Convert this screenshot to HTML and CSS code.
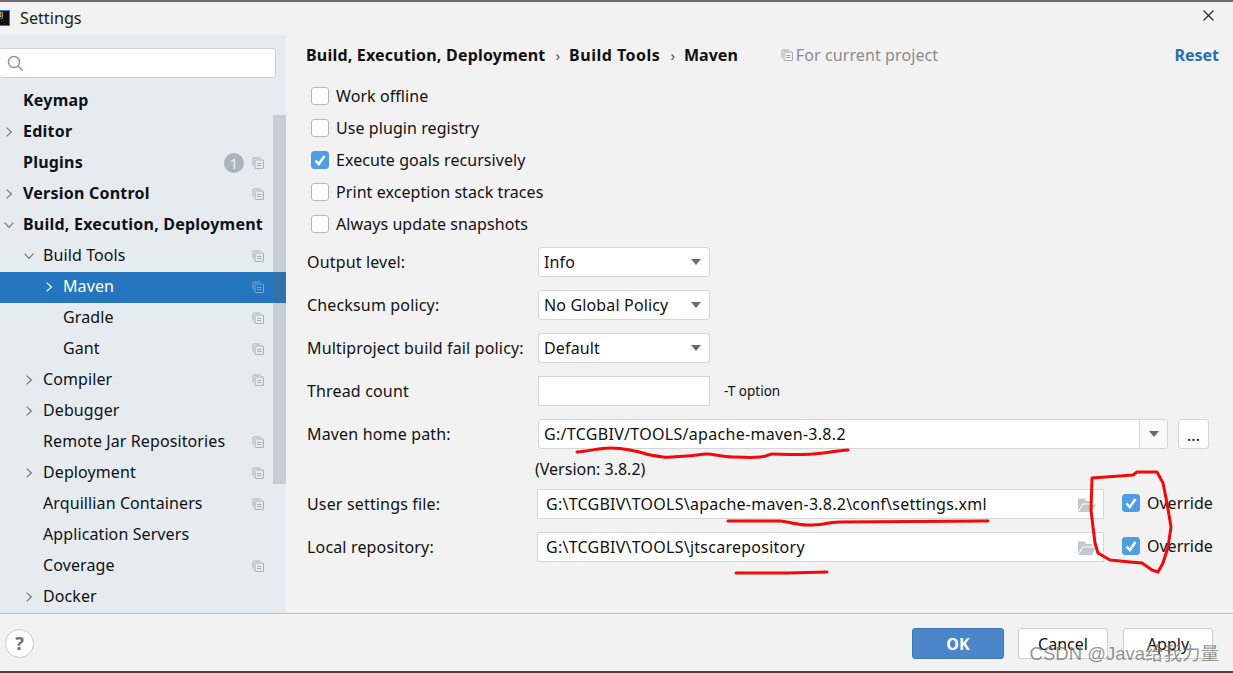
FILE: index.html
```html
<!DOCTYPE html>
<html lang="en">
<head>
<meta charset="utf-8">
<title>Settings</title>
<link rel="stylesheet" href="styles.css">
</head>
<body>
<svg class="defs" width="0" height="0">
  <symbol id="copy" viewBox="0 0 12 12">
    <path d="M1 8.5V1.5a.5.5 0 0 1 .5-.5H8.500" fill="none" stroke="currentColor"/>
    <rect x="3" y="3" width="8.500" height="8.500" rx=".5" fill="none" stroke="currentColor"/>
    <path d="M5 6.500h4.500M5 8.500h4.500" stroke="currentColor"/>
  </symbol>
  <symbol id="right" viewBox="0 0 10 14"><path d="M2 1.500 8 7l-6 5.500" fill="none" stroke="currentColor" stroke-width="1.500"/></symbol>
  <symbol id="down" viewBox="0 0 14 10"><path d="M1.500 2 7 8l5.500-6" fill="none" stroke="currentColor" stroke-width="1.500"/></symbol>
  <symbol id="check" viewBox="0 0 16 16"><path d="M3.500 8.500 6.800 12 12.500 4" fill="none" stroke="#fff" stroke-width="2.500"/></symbol>
  <symbol id="folder" viewBox="0 0 19 14"><path d="M1 13V.5h6.500L9 3h6v2.500H5.500L1 13Zm.500 1L6 6.500h13L15 14Z" fill="#c3c9ce"/></symbol>
</svg>

<div class="dialog">
  <header class="titlebar">
    <span class="app-icon">IJ</span>
    <span class="title">Settings</span>
    <span class="close">
      <svg width="13" height="13" viewBox="0 0 13 13"><path d="M1.500 1.500l10 10m0-10-10 10" stroke="#222" stroke-width="1.100"/></svg>
    </span>
  </header>

  <div class="main">
    <aside class="sidebar">
      <div class="search">
        <svg width="17" height="17" viewBox="0 0 17 17"><circle cx="7" cy="7" r="5.500" fill="none" stroke="#8b9096" stroke-width="1.400"/><path d="m11 11 4.500 4.500" stroke="#8b9096" stroke-width="1.600"/></svg>
      </div>
      <ul class="tree">
        <li class="row l0 bold">Keymap</li>
        <li class="row l0 bold"><svg class="arrow"><use href="#right"/></svg>Editor</li>
        <li class="row l0 bold">Plugins<span class="badge">1</span><svg class="copy"><use href="#copy"/></svg></li>
        <li class="row l0 bold"><svg class="arrow"><use href="#right"/></svg>Version Control<svg class="copy"><use href="#copy"/></svg></li>
        <li class="row l0 bold"><svg class="arrow open"><use href="#down"/></svg>Build, Execution, Deployment</li>
        <li class="row l1"><svg class="arrow open"><use href="#down"/></svg>Build Tools<svg class="copy"><use href="#copy"/></svg></li>
        <li class="row l2 selected"><svg class="arrow"><use href="#right"/></svg>Maven<svg class="copy"><use href="#copy"/></svg></li>
        <li class="row l2">Gradle<svg class="copy"><use href="#copy"/></svg></li>
        <li class="row l2">Gant<svg class="copy"><use href="#copy"/></svg></li>
        <li class="row l1"><svg class="arrow"><use href="#right"/></svg>Compiler<svg class="copy"><use href="#copy"/></svg></li>
        <li class="row l1"><svg class="arrow"><use href="#right"/></svg>Debugger</li>
        <li class="row l1">Remote Jar Repositories<svg class="copy"><use href="#copy"/></svg></li>
        <li class="row l1"><svg class="arrow"><use href="#right"/></svg>Deployment<svg class="copy"><use href="#copy"/></svg></li>
        <li class="row l1">Arquillian Containers<svg class="copy"><use href="#copy"/></svg></li>
        <li class="row l1">Application Servers</li>
        <li class="row l1">Coverage<svg class="copy"><use href="#copy"/></svg></li>
        <li class="row l1"><svg class="arrow"><use href="#right"/></svg>Docker</li>
      </ul>
      <div class="thumb"></div>
    </aside>

    <section class="content">
      <div class="crumbs">
        <span class="crumb">Build, Execution, Deployment</span><span class="sep">›</span>
        <span class="crumb wide">Build Tools</span><span class="sep">›</span>
        <span class="crumb plain">Maven</span>
        <span class="scope"><svg class="copy scope-icon"><use href="#copy"/></svg>For current project</span>
        <a class="reset">Reset</a>
      </div>

      <div class="checks">
        <label class="check"><span class="box"></span>Work offline</label>
        <label class="check"><span class="box"></span>Use plugin registry</label>
        <label class="check"><span class="box on"><svg><use href="#check"/></svg></span>Execute goals recursively</label>
        <label class="check"><span class="box"></span>Print exception stack traces</label>
        <label class="check"><span class="box"></span>Always update snapshots</label>
      </div>

      <div class="form">
        <div class="frow"><span class="flabel">Output level:</span><div class="select">Info<i class="tri"></i></div></div>
        <div class="frow"><span class="flabel">Checksum policy:</span><div class="select">No Global Policy<i class="tri"></i></div></div>
        <div class="frow"><span class="flabel">Multiproject build fail policy:</span><div class="select">Default<i class="tri"></i></div></div>
        <div class="frow"><span class="flabel">Thread count</span><div class="input short"></div><span class="hint">-T option</span></div>
        <div class="frow"><span class="flabel">Maven home path:</span>
          <div class="combo"><span class="combo-text">G:/TCGBIV/TOOLS/apache-maven-3.8.2</span><span class="combo-btn"><i class="tri"></i></span></div>
          <div class="dots">...</div>
        </div>
        <div class="version">(Version: 3.8.2)</div>
        <div class="frow"><span class="flabel">User settings file:</span>
          <div class="input path">G:\TCGBIV\TOOLS\apache-maven-3.8.2\conf\settings.xml<svg class="folder"><use href="#folder"/></svg></div>
          <label class="check over"><span class="box on"><svg><use href="#check"/></svg></span>Override</label>
        </div>
        <div class="frow"><span class="flabel">Local repository:</span>
          <div class="input path">G:\TCGBIV\TOOLS\jtscarepository<svg class="folder"><use href="#folder"/></svg></div>
          <label class="check over"><span class="box on"><svg><use href="#check"/></svg></span>Override</label>
        </div>
      </div>
    </section>
  </div>

  <footer class="footer">
    <span class="help">?</span>
    <div class="buttons">
      <button class="btn primary">OK</button>
      <button class="btn">Cancel</button>
      <button class="btn">Apply</button>
    </div>
  </footer>

  <svg class="ink" width="1233" height="673" viewBox="0 0 1233 673">
    <path d="M577 452C590 451 600 448 610 448S625 449 630 450 640 452 643 453 655 456 663 457 680 456 687 456 700 454 707 454 722 457 733 457 750 458 760 457 768 454 773 454 800 455 813 454 835 451 848 450"/>
    <path d="M728 521 780 521C790 522 798 525 807 525S818 525 823 524 832 522 840 522L988 521"/>
    <path d="M736 573 787 573 827 572"/>
    <path d="M1092 478 1133 475 1137 472 1157 472 1163 483 1167 503 1171 527 1168 547 1163 563 1158 572 1152 570 1142 563 1130 562 1110 560 1098 553 1095 543 1093 527 1091 510Z"/>
  </svg>
  <div class="watermark">CSDN @Java给我力量</div>
</div>
</body>
</html>
```

FILE: styles.css
```css
* { box-sizing: border-box; }
html, body { margin: 0; height: 100%; overflow: hidden; }
body { background: #f2f2f2; }
.defs { position: absolute; }

.dialog {
  position: relative;
  width: 1233px;
  height: 673px;
  display: flex;
  flex-direction: column;
  background: #f2f2f2;
  color: #111;
  font: 16px "Noto Sans", "Open Sans", sans-serif;
  border-top: 2px solid #6d6d6d;
  border-bottom: 2px solid #444;
  overflow: hidden;
}

.titlebar { height: 33px; display: flex; align-items: center; flex: none; }
.app-icon {
  width: 11px; height: 16px; margin-left: -1px; margin-top: -1px;
  background: #111; border: 1px solid #1e7be0; border-left: 0;
  color: #fff; font-size: 7px; line-height: 8px; overflow: hidden; flex: none;
}
.title { margin: -2px 0 0 10px; color: #222; font-size: 16.200px; }
.close { margin-left: auto; margin-right: 18px; display: flex; margin-top: -6px; }

.main { flex: 1; display: flex; min-height: 0; }

.sidebar { position: relative; width: 286px; flex: none; background: #e6ebf0; overflow: hidden; padding-top: 13px; }
.search {
  width: 277px; height: 30px; margin-left: -1px; padding: 6px 0 0 7px;
  background: #fff; border: 1px solid #d0d2d4; border-radius: 3px;
}
.tree { list-style: none; margin: 8px 0 0; padding: 0; letter-spacing: .1px; }
.row { display: flex; align-items: center; height: 31px; position: relative; padding-bottom: 3px; color: #0e1116; }
.bold { font-weight: 700; letter-spacing: .22px; }
.l0 { padding-left: 23px; }
.l1 { padding-left: 43px; }
.l2 { padding-left: 63px; }
.selected { background: #2675bf; color: #fff; }
.arrow { position: absolute; top: 9px; width: 8px; height: 12px; color: #777; }
.arrow.open { width: 12px; height: 8px; top: 11px; margin-left: -2px; }
.l0 .arrow { left: 5px; }
.l1 .arrow { left: 25px; }
.l2 .arrow { left: 45px; color: #fff; }
.copy { position: absolute; right: 22px; top: 9px; width: 12px; height: 12px; color: #a9b0b6; }
.selected .copy { color: #7ba6d2; }
.badge {
  position: absolute; right: 42px; top: 5px;
  width: 20px; height: 20px; border-radius: 50%;
  background: #a9b4bd; color: #eef1f3;
  font-weight: 400; font-size: 15px; line-height: 20px; text-align: center;
}
.thumb {
  position: absolute; right: 0; top: 80px;
  width: 13px; height: 369px;
  background: rgba(90, 100, 115, .22);
}

.content { flex: 1; padding: 0 14px 0 20px; min-width: 0; }
.crumbs { display: flex; align-items: center; height: 22px; margin-top: 9px; font-size: 16px; }
.crumb { font-weight: 700; letter-spacing: .2px; }
.crumb.wide { letter-spacing: .5px; }
.crumb.plain { letter-spacing: 0; }
.sep { margin: 0 9px 0 10px; color: #555; font-size: 15px; }
.scope { display: flex; align-items: center; margin-left: 43px; color: #8b8b8b; letter-spacing: .1px; }
.copy.scope-icon { position: static; margin-right: 3px; color: #a6a6a6; }
.reset { margin-left: auto; color: #2470b3; font-weight: 700; }

.checks { margin: 14px 0 0 5px; display: flex; flex-direction: column; letter-spacing: .07px; }
.check { display: flex; align-items: center; height: 32px; color: #111; }
.box {
  width: 18px; height: 18px; margin-right: 7px; flex: none;
  background: #fff; border: 1px solid #b4b6b8; border-radius: 3px;
}
.box.on { background: #4f9ee3; border-color: #4f9ee3; }
.box svg { display: block; width: 16px; height: 16px; }

.form { margin-top: 7px; display: flex; flex-direction: column; }
.frow { display: flex; align-items: center; height: 30px; margin-bottom: 13px; }
.flabel { width: 231px; margin-left: 1px; flex: none; letter-spacing: .16px; }
.select, .input, .combo { height: 30px; background: #fff; border: 1px solid #d6d6d6; display: flex; align-items: center; }
.select { position: relative; width: 172px; padding-left: 5px; border-radius: 3px; letter-spacing: .15px; }
.tri { width: 0; height: 0; border: 5.500px solid transparent; border-top: 6px solid #6b6b6b; border-bottom: 0; }
.select .tri { position: absolute; right: 8px; top: 11px; }
.input.short { width: 172px; }
.hint { margin-left: 14px; font-size: 13.500px; }
.combo { width: 630px; border-radius: 3px; overflow: hidden; }
.combo-text { flex: 1; padding-left: 5px; letter-spacing: .3px; }
.combo-btn { width: 28px; height: 100%; border-left: 1px solid #d6d6d6; background: #fafafa; display: flex; align-items: center; justify-content: center; }
.dots {
  width: 31px; height: 30px; margin-left: 10px; text-align: center; line-height: 30px;
  background: #fff; border: 1px solid #d6d6d6; border-radius: 3px;
}
.version { margin: -4px 0 9px 229px; height: 22px; line-height: 22px; }
.input.path { width: 567px; padding-left: 8px; position: relative; margin-left: -1px; letter-spacing: .25px; }
.folder { position: absolute; right: 7px; top: 8px; width: 19px; height: 14px; }
.over { margin: -2px 0 0 18px; letter-spacing: 0; }

.footer {
  height: 58px; flex: none; display: flex; align-items: center;
  border-top: 1px solid #bdbdbd; background: #f2f2f2; padding: 2px 20px 0 5px;
}
.help {
  width: 29px; height: 29px; border-radius: 50%;
  background: #fff; border: 1px solid #c9c9c9;
  color: #6f6f6f; font-weight: 700; font-size: 18px; line-height: 27px; text-align: center;
}
.buttons { margin-left: auto; display: flex; gap: 14px; }
.btn {
  width: 90px; height: 31px; padding: 0;
  font: inherit; color: #111; background: #fff;
  border: 1px solid #d0d0d0; border-radius: 3px;
}
.btn:last-child { margin-left: 1px; }
.btn.primary { width: 92px; background: #4a86c8; border-color: #3f78b8; color: #fff; font-weight: 700; }

.ink { position: absolute; left: 0; top: -2px; pointer-events: none; }
.ink path { fill: none; stroke: #f00a0a; stroke-width: 3; stroke-linejoin: round; stroke-linecap: round; }
.watermark {
  position: absolute; right: 14px; bottom: 6px;
  color: rgba(120, 120, 120, .8); font: 18.500px "Liberation Sans", "Noto Sans CJK SC", sans-serif;
}
```
